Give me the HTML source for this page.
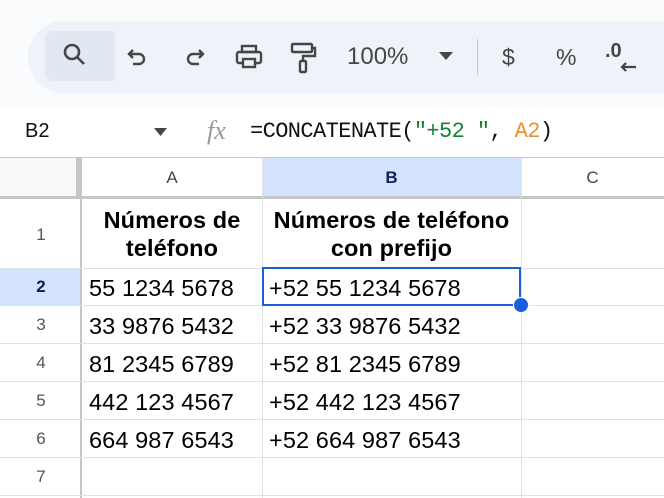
<!DOCTYPE html><html><head><style>
*{margin:0;padding:0;box-sizing:border-box}
body{width:664px;height:498px;overflow:hidden;background:#fff;font-family:"Liberation Sans",Arial,sans-serif;position:relative}
.a{position:absolute}
.top{left:0;top:0;width:664px;height:107px;background:#f9fbfd}
.pill{left:28px;top:21px;width:680px;height:72px;background:#eef2f9;border-radius:36px}
.hl{left:45px;top:31px;width:70px;height:50px;background:#e2e8f2;border-radius:8px 0 0 8px}
.ic{color:#444746;font-size:22px}
.hd{background:#f8f9fa;color:#444;font-size:17px;text-align:center}
.hl1{background:#e1e1e1}
.cell{font-size:23.5px;color:#000;letter-spacing:0.1px}
.rn{font-size:17px;color:#555;width:82px;text-align:center}
</style></head><body>
<div class="a top"></div>
<div class="a pill"></div>
<div class="a hl"></div>
<svg class="a" style="left:60px;top:40px" width="30" height="30" viewBox="0 0 30 30" fill="none" stroke="#444746" stroke-width="2.6"><circle cx="12" cy="12" r="7"/><path d="M17 17l7 7"/></svg>
<svg class="a" style="left:124px;top:44px" width="28" height="28" viewBox="0 0 28 28" fill="none" stroke="#444746" stroke-width="2.4"><path d="M9 6l-4 4 4 4M5 10h10a5 5 0 010 10H9"/></svg>
<svg class="a" style="left:180px;top:44px" width="28" height="28" viewBox="0 0 28 28" fill="none" stroke="#444746" stroke-width="2.4"><path d="M19 6l4 4-4 4M23 10H13a5 5 0 000 10h6"/></svg>
<svg class="a" style="left:234px;top:42px" width="30" height="30" viewBox="0 0 30 30" fill="none" stroke="#444746" stroke-width="2.4"><rect x="8" y="4" width="14" height="6"/><rect x="3" y="10" width="24" height="11" rx="2"/><rect x="9" y="17" width="12" height="8" fill="#eef2f9"/></svg>
<svg class="a" style="left:289px;top:40px" width="28" height="36" viewBox="0 0 28 36" fill="none" stroke="#444746" stroke-width="2.4"><rect x="3" y="4" width="20" height="8" rx="1"/><path d="M23 8h3v8H14v5"/><rect x="11" y="21" width="6" height="11" rx="1"/></svg>
<div class="a ic" style="left:347px;top:43px;font-size:24px">100%</div>
<svg class="a" style="left:439px;top:52px" width="14" height="8"><path d="M0 0h14L7 8z" fill="#444746"/></svg>
<div class="a" style="left:477px;top:39px;width:1px;height:36px;background:#c4c7c5"></div>
<div class="a ic" style="left:502px;top:44px;font-size:23px">$</div>
<div class="a ic" style="left:556px;top:44px;font-size:23px">%</div>
<div class="a ic" style="left:605px;top:40px;font-size:20px;font-weight:bold">.0</div>
<svg class="a" style="left:618px;top:60px" width="20" height="14" fill="none" stroke="#444746" stroke-width="2.2"><path d="M18 7H4M8 3L4 7l4 4"/></svg>
<div class="a" style="left:25px;top:120px;font-size:20px;color:#111">B2</div>
<svg class="a" style="left:154px;top:128px" width="13" height="8"><path d="M0 0h13L6.5 8z" fill="#444746"/></svg>
<div class="a" style="left:207px;top:116px;font-size:26px;font-style:italic;font-family:'Liberation Serif',serif;color:#999">fx</div>
<div class="a" style="left:250px;top:119px;font-size:22px;font-family:'Liberation Mono',monospace;letter-spacing:-0.6px;color:#111">=CONCATENATE(<span style="color:#188038">"+52 "</span>, <span style="color:#e8912d">A2</span>)</div>
<div class="a hd" style="left:0;top:157px;width:82px;height:42px"></div>
<div class="a hd" style="left:82px;top:157px;width:180px;height:42px;background:#fff;line-height:42px">A</div>
<div class="a hd" style="left:262px;top:157px;width:259px;height:42px;background:#d3e3fd;color:#0b2158;font-weight:bold;line-height:42px">B</div>
<div class="a hd" style="left:521px;top:157px;width:143px;height:42px;background:#fff;line-height:42px">C</div>
<div class="a" style="left:0;top:157px;width:664px;height:1px;background:#c4c7c5"></div>
<div class="a" style="left:0;top:196px;width:664px;height:3px;background:#c4c7c5"></div>
<div class="a" style="left:76px;top:157px;width:6px;height:42px;background:#c4c7c5"></div>
<div class="a" style="left:80px;top:199px;width:2px;height:299px;background:#c4c7c5"></div>
<div class="a" style="left:0;top:268px;width:80px;height:38px;background:#d3e3fd"></div>
<div class="a hl1" style="left:262px;top:157px;width:1px;height:341px"></div>
<div class="a hl1" style="left:521px;top:157px;width:1px;height:341px"></div>
<div class="a hl1" style="left:0;top:268px;width:664px;height:1px"></div>
<div class="a hl1" style="left:0;top:305px;width:664px;height:1px"></div>
<div class="a hl1" style="left:0;top:343px;width:664px;height:1px"></div>
<div class="a hl1" style="left:0;top:381px;width:664px;height:1px"></div>
<div class="a hl1" style="left:0;top:419px;width:664px;height:1px"></div>
<div class="a hl1" style="left:0;top:457px;width:664px;height:1px"></div>
<div class="a hl1" style="left:0;top:495px;width:664px;height:1px"></div>
<div class="a rn" style="top:225px">1</div>
<div class="a rn" style="top:277px;color:#0b2158;font-weight:bold">2</div>
<div class="a rn" style="top:315px">3</div>
<div class="a rn" style="top:353px">4</div>
<div class="a rn" style="top:391px">5</div>
<div class="a rn" style="top:429px">6</div>
<div class="a rn" style="top:467px">7</div>
<div class="a cell" style="left:82px;top:206px;width:180px;text-align:center;font-weight:bold;line-height:28px">Números de<br>teléfono</div>
<div class="a cell" style="left:262px;top:206px;width:259px;text-align:center;font-weight:bold;line-height:28px">Números de teléfono<br>con prefijo</div>
<div class="a cell" style="left:89px;top:275px">55 1234 5678</div>
<div class="a cell" style="left:89px;top:313px">33 9876 5432</div>
<div class="a cell" style="left:89px;top:351px">81 2345 6789</div>
<div class="a cell" style="left:89px;top:389px">442 123 4567</div>
<div class="a cell" style="left:89px;top:427px">664 987 6543</div>
<div class="a cell" style="left:269px;top:275px">+52 55 1234 5678</div>
<div class="a cell" style="left:269px;top:313px">+52 33 9876 5432</div>
<div class="a cell" style="left:269px;top:351px">+52 81 2345 6789</div>
<div class="a cell" style="left:269px;top:389px">+52 442 123 4567</div>
<div class="a cell" style="left:269px;top:427px">+52 664 987 6543</div>
<div class="a" style="left:262px;top:267px;width:259px;height:39px;border:2px solid #1a5fd8"></div>
<div class="a" style="left:513px;top:297px;width:16px;height:16px;border-radius:50%;background:#1a5fd8;border:1px solid #fff"></div>
</body></html>
